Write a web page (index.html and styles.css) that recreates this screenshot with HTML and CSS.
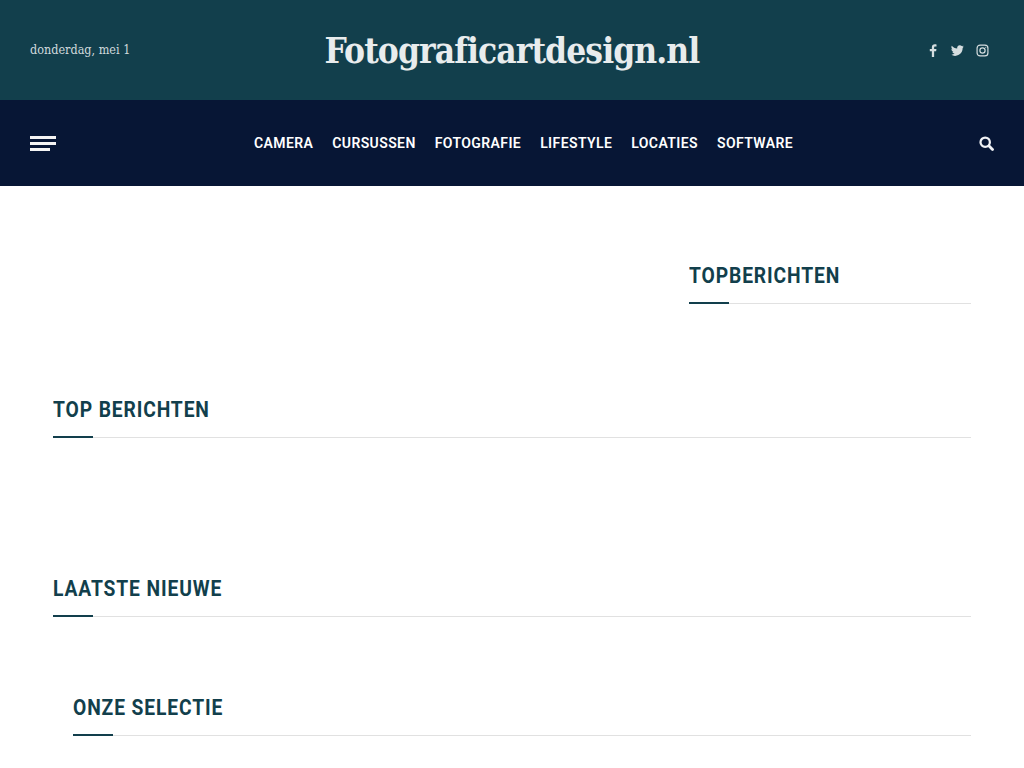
FILE: index.html
```html
<!DOCTYPE html>
<html lang="nl">
<head>
    <meta charset="UTF-8">
    <meta name="viewport" content="width=device-width, initial-scale=1.0">
    <title>Fotograficartdesign.nl</title>
    <link rel="stylesheet" href="styles.css">
</head>
<body>
    <header class="top-bar">
        <span class="top-date">donderdag, mei 1</span>
        <a class="site-title" href="#">Fotograficartdesign.nl</a>
        <div class="social">
            <svg class="social-icon" viewBox="0 0 24 24" fill="currentColor"><path d="M15 24V13.500h3.700l.6-4.300H15V6.600c0-1.200.4-2.100 2.100-2.100h2.300V.7C19 .6 17.700.5 16.200.5c-3.200 0-5.400 2-5.400 5.600v3.100H7v4.300h3.800V24z"/></svg>
            <svg class="social-icon" viewBox="0 0 24 24" fill="currentColor"><path d="M23.600 4.600c-.9.400-1.800.6-2.800.8 1-.6 1.800-1.500 2.100-2.700-.9.600-2 1-3.100 1.200A4.900 4.900 0 0 0 11.500 8.400C7.400 8.200 3.800 6.300 1.400 3.300c-1.300 2.200-.7 5.100 1.500 6.500-.8 0-1.500-.2-2.200-.6 0 2.300 1.700 4.400 3.900 4.900-.7.200-1.500.2-2.200.1.600 2 2.500 3.400 4.600 3.400A9.900 9.900 0 0 1 0 19.600 14 14 0 0 0 21.500 7.200c1-.7 1.500-1.600 2.100-2.600z"/></svg>
            <svg class="social-icon" viewBox="0 0 24 24" fill="none" stroke="currentColor" stroke-width="2.200"><rect x="2" y="2" width="20" height="20" rx="5.500"/><circle cx="12" cy="12" r="4.800"/><circle cx="18" cy="6" r="1" fill="currentColor" stroke="none"/></svg>
        </div>
    </header>

    <nav class="main-nav">
        <button class="menu-toggle" aria-label="Menu">
            <span></span>
            <span></span>
            <span class="short"></span>
        </button>
        <ul class="nav-links">
            <li><a href="#">Camera</a></li>
            <li><a href="#">Cursussen</a></li>
            <li><a href="#">Fotografie</a></li>
            <li><a href="#">Lifestyle</a></li>
            <li><a href="#">Locaties</a></li>
            <li><a href="#">Software</a></li>
        </ul>
        <svg class="search-icon" viewBox="0 0 16 16" fill="none" stroke="currentColor"><circle cx="6.600" cy="6.600" r="5" stroke-width="2.400"/><path d="M10.500 10.500 L14.400 14.400" stroke-width="3" stroke-linecap="round"/></svg>
    </nav>

    <main class="content">
        <div class="upper-row">
            <div class="upper-main"></div>
            <aside class="sidebar">
                <div class="section-head">
                    <h2>Topberichten</h2>
                </div>
            </aside>
        </div>

        <section class="block block-top">
            <div class="section-head">
                <h2>Top berichten</h2>
            </div>
        </section>

        <section class="block block-latest">
            <div class="section-head">
                <h2>Laatste nieuwe</h2>
            </div>
        </section>

        <section class="block block-pick">
            <div class="section-head">
                <h2>Onze selectie</h2>
            </div>
        </section>
    </main>
</body>
</html>
```

FILE: styles.css
```css
* {
    margin: 0;
    padding: 0;
    box-sizing: border-box;
}

body {
    font-family: 'Roboto', 'Liberation Sans', sans-serif;
    background: #FFFFFF;
    color: #123F4C;
    overflow: hidden;
    height: 768px;
}

a {
    color: inherit;
    text-decoration: none;
}

/* Top bar */
.top-bar {
    height: 100px;
    background: #123F4C;
    padding: 0 30px;
    display: grid;
    grid-template-columns: 1fr auto 1fr;
    align-items: center;
    color: #E8ECED;
}

.top-date {
    font-family: 'DejaVu Serif Condensed', 'Liberation Serif', serif;
    font-size: 12.500px;
    color: #D0DADC;
    margin-top: -2px;
}

.site-title {
    font-family: 'DejaVu Serif Condensed', 'Liberation Serif', serif;
    font-size: 35px;
    font-weight: 700;
    letter-spacing: -0.9px;
}

.social {
    display: flex;
    justify-content: flex-end;
    align-items: center;
    gap: 12px;
    padding-right: 5px;
    color: #D5DDDF;
}

.social-icon {
    width: 13px;
    height: 13px;
}

/* Nav */
.main-nav {
    height: 86px;
    background: #071635;
    padding: 0 30px;
    display: flex;
    align-items: center;
    justify-content: space-between;
    color: #FFFFFF;
}

.menu-toggle {
    width: 26px;
    display: flex;
    flex-direction: column;
    gap: 3px;
    background: none;
    border: none;
}

.menu-toggle span {
    display: block;
    height: 3px;
    background: #F4F4F4;
}

.menu-toggle .short {
    width: 20px;
}

.nav-links {
    list-style: none;
    display: flex;
    gap: 19px;
    margin-left: 12px;
    margin-top: -2px;
}

.nav-links a {
    font-size: 14px;
    font-weight: 600;
    letter-spacing: 0.4px;
    text-transform: uppercase;
}

.search-icon {
    width: 15px;
    height: 15px;
    color: #F0F2F5;
}

/* Content */
.content {
    padding: 0 53px;
}

.upper-row {
    display: flex;
    justify-content: space-between;
    padding-top: 74px;
}

.sidebar {
    width: 282px;
}

.section-head {
    border-bottom: 1px solid #E1E1E1;
    height: 44px;
    position: relative;
}

.section-head::after {
    content: '';
    position: absolute;
    left: 0;
    bottom: -1px;
    width: 40px;
    height: 2px;
    background: #123F4C;
}

/* no condensed sans installed, so squeeze Roboto */
.section-head h2 {
    font-size: 22px;
    line-height: 32px;
    font-weight: 700;
    letter-spacing: 1px;
    text-transform: uppercase;
    transform: scaleX(0.875);
    transform-origin: left center;
    white-space: nowrap;
}

.block-top {
    margin-top: 90px;
}

.block-latest {
    margin-top: 135px;
}

.block-pick {
    margin-top: 75px;
    padding-left: 20px;
}
```
